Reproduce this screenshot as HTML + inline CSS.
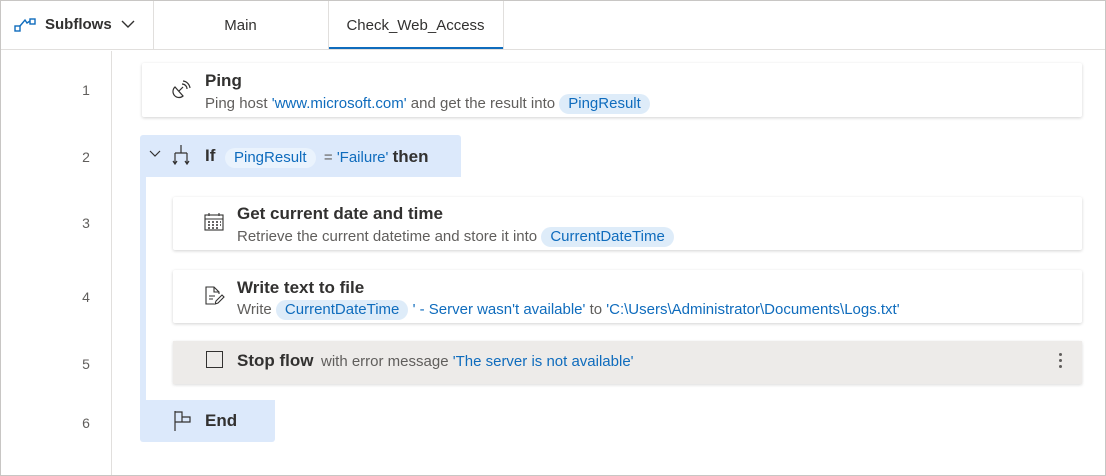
<!DOCTYPE html>
<html><head><style>
*{margin:0;padding:0;box-sizing:border-box}
body{width:1106px;height:476px;background:#fff;font-family:"Liberation Sans",sans-serif;position:relative;overflow:hidden;color:#323130}
.frame{position:absolute;left:0;top:0;width:1106px;height:476px;border:1px solid #c8c6c4}
.hdr{position:absolute;left:1px;top:1px;width:1104px;height:49px;border-bottom:1px solid #e1dfdd}
.abs{position:absolute}
.num{position:absolute;width:44px;text-align:center;left:64px;font-size:14px;color:#605e5c}
.card{position:absolute;background:#fff;box-shadow:0 1px 3px rgba(0,0,0,.18);border-radius:2px}
.t{position:absolute;font-size:17px;font-weight:bold;color:#323130}
.s{position:absolute;font-size:15px;color:#605e5c;white-space:nowrap}
.b{color:#0f6cbd}
.pill{display:inline-block;background:#deecf9;color:#0f6cbd;border-radius:10px;padding:1px 9px;line-height:18px}
</style></head><body>
<div class="frame"></div>
<div class="hdr"></div>
<div class="abs" style="left:153px;top:1px;width:1px;height:49px;background:#e1dfdd"></div>
<div class="abs" style="left:328px;top:1px;width:1px;height:49px;background:#e1dfdd"></div>
<div class="abs" style="left:503px;top:1px;width:1px;height:49px;background:#e1dfdd"></div>
<div class="abs" style="left:329px;top:47px;width:174px;height:2px;background:#0f6cbd"></div>
<svg class="abs" style="left:14px;top:17px" width="22" height="16" viewBox="0 0 22 16"><rect x="1" y="9" width="5" height="5" fill="none" stroke="#0f6cbd" stroke-width="1.4"/><rect x="16" y="2" width="5" height="5" fill="none" stroke="#0f6cbd" stroke-width="1.4"/><path d="M6 9 L11 3 L13 6 L16 4" fill="none" stroke="#0f6cbd" stroke-width="1.4"/></svg>
<div class="abs" style="left:45px;top:16px;font-size:15px;font-weight:bold;color:#323130">Subflows</div>
<svg class="abs" style="left:121px;top:20px" width="14" height="9"><path d="M1 1 L7 7 L13 1" fill="none" stroke="#323130" stroke-width="1.4"/></svg>
<div class="abs" style="left:153px;top:17px;width:175px;text-align:center;font-size:15px;color:#323130">Main</div>
<div class="abs" style="left:328px;top:17px;width:175px;text-align:center;font-size:15px;color:#323130">Check_Web_Access</div>
<div class="abs" style="left:111px;top:51px;width:1px;height:424px;background:#e1dfdd"></div>
<div class="num" style="top:82px">1</div>
<div class="num" style="top:149px">2</div>
<div class="num" style="top:215px">3</div>
<div class="num" style="top:289px">4</div>
<div class="num" style="top:356px">5</div>
<div class="num" style="top:415px">6</div>

<div class="card" style="left:142px;top:63px;width:940px;height:54px"></div>
<svg class="abs" style="left:171px;top:80px" width="20" height="20" viewBox="0 0 20 20" fill="none" stroke="#323130" stroke-width="1.2"><path d="M4 7 A6 6 0 0 0 12 16 Z"/><path d="M8 11 L12 7"/><path d="M11 4 A5 5 0 0 1 16 9"/><path d="M12 1 A8 8 0 0 1 19 8"/></svg>
<div class="t" style="left:205px;top:71px">Ping</div>
<div class="s" style="left:205px;top:94px">Ping host <span class="b">'www.microsoft.com'</span> and get the result into <span class="pill">PingResult</span></div>

<div class="abs" style="left:140px;top:135px;width:321px;height:42px;background:#dce9fb;border-radius:3px 3px 0 0"></div>
<div class="abs" style="left:140px;top:170px;width:6px;height:235px;background:#dce9fb"></div>
<div class="abs" style="left:140px;top:400px;width:135px;height:42px;background:#dce9fb;border-radius:0 0 3px 3px"></div>
<svg class="abs" style="left:149px;top:150px" width="12" height="8"><path d="M1 1 L6 6 L11 1" fill="none" stroke="#323130" stroke-width="1.2"/></svg>
<svg class="abs" style="left:172px;top:144px" width="18" height="22" viewBox="0 0 18 22" fill="none" stroke="#323130" stroke-width="1.2"><path d="M9 1 V9 M3 9 H15 M3 9 V20 M15 9 V20 M1 17 L3 20 L5 17 M13 17 L15 20 L17 17"/></svg>
<div class="t" style="left:205px;top:146px">If</div>
<div class="s" style="left:225px;top:147px"><span class="pill" style="background:#eaf3fd">PingResult</span> &nbsp;= <span class="b">'Failure'</span> <b style="font-size:17px;color:#323130">then</b></div>

<div class="card" style="left:173px;top:197px;width:909px;height:53px"></div>
<svg class="abs" style="left:204px;top:213px" width="20" height="18" viewBox="0 0 20 18" fill="none" stroke="#323130" stroke-width="1.1"><rect x="1" y="2" width="18" height="15"/><path d="M1 6 H19 M5 0 V3 M15 0 V3"/><path d="M4 9h2M8 9h2M12 9h2M16 9h1M4 12h2M8 12h2M12 12h2M16 12h1M4 15h2M8 15h2M12 15h2" stroke-width="1.4"/></svg>
<div class="t" style="left:237px;top:204px">Get current date and time</div>
<div class="s" style="left:237px;top:227px">Retrieve the current datetime and store it into <span class="pill">CurrentDateTime</span></div>

<div class="card" style="left:173px;top:270px;width:909px;height:53px"></div>
<svg class="abs" style="left:205px;top:286px" width="20" height="20" viewBox="0 0 20 20" fill="none" stroke="#323130" stroke-width="1.1"><path d="M9 18 H1 V1 H9 L14 6 V8 M9 1 V6 H14 M4 10 H10 M4 13 H8"/><path d="M10 18 L11 15 L17 9 L19 11 L13 17 Z"/></svg>
<div class="t" style="left:237px;top:278px">Write text to file</div>
<div class="s" style="left:237px;top:300px">Write <span class="pill">CurrentDateTime</span> <span class="b">' - Server wasn't available'</span> to <span class="b">'C:\Users\Administrator\Documents\Logs.txt'</span></div>

<div class="abs" style="left:173px;top:341px;width:909px;height:43px;background:#edebe9;box-shadow:0 1px 3px rgba(0,0,0,.15)"></div>
<div class="abs" style="left:206px;top:351px;width:17px;height:17px;border:1.3px solid #323130"></div>
<div class="t" style="left:237px;top:351px">Stop flow</div>
<div class="s" style="left:321px;top:353px">with error message <span class="b">'The server is not available'</span></div>
<div class="abs" style="left:1059px;top:353px;width:3px;height:3px;background:#605e5c;border-radius:2px;box-shadow:0 6px 0 #605e5c,0 12px 0 #605e5c"></div>

<svg class="abs" style="left:173px;top:410px" width="20" height="22" viewBox="0 0 20 22" fill="none" stroke="#323130" stroke-width="1.2"><path d="M2 1 V21 M2 2 H9 V7 H17 V12 H2 M9 7 V12"/></svg>
<div class="t" style="left:205px;top:411px">End</div>
</body></html>
